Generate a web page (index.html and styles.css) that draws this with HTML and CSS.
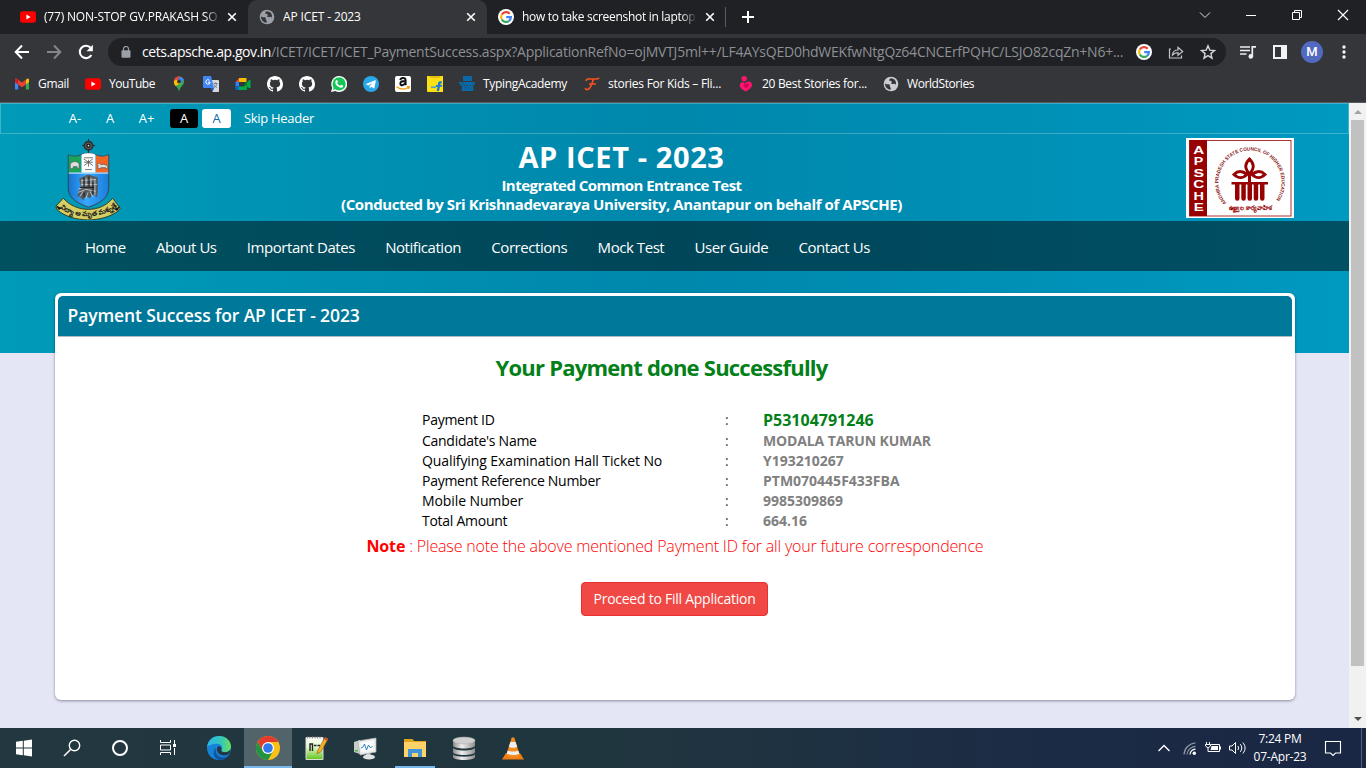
FILE: index.html
```html
<!DOCTYPE html>
<html lang="en">
<head>
<meta charset="utf-8">
<title>AP ICET - 2023</title>
<link rel="stylesheet" href="styles.css">
</head>
<body>
<svg class="defs" width="0" height="0">
  <defs>
    <linearGradient id="edgeTop" x1="0" y1="0" x2="1" y2="0"><stop offset="0" stop-color="#2bb5ea"/><stop offset=".6" stop-color="#36c8b8"/><stop offset="1" stop-color="#6ce05a"/></linearGradient>
    <linearGradient id="shield" x1="0" y1="0" x2="1" y2="0"><stop offset="0" stop-color="#1673cf"/><stop offset=".45" stop-color="#36a8ff"/><stop offset="1" stop-color="#1b7ddb"/></linearGradient>
    <linearGradient id="disk" x1="0" y1="0" x2="1" y2="0"><stop offset="0" stop-color="#8b8b8b"/><stop offset=".4" stop-color="#efefef"/><stop offset="1" stop-color="#8f8f8f"/></linearGradient>
    <linearGradient id="note" x1="0" y1="0" x2="0" y2="1"><stop offset="0" stop-color="#fff"/><stop offset=".45" stop-color="#dff5c6"/><stop offset="1" stop-color="#5fc51d"/></linearGradient>
    <symbol id="youtube" viewBox="0 0 16 16"><rect y="2.3" width="16" height="11.4" rx="2.6" fill="#f00"/><path d="M6.4 5.6v4.8L10.6 8z" fill="#fff"/></symbol>
    <symbol id="globe" viewBox="0 0 16 16"><circle cx="8" cy="8" r="7.3" fill="currentColor"/><path d="M2 7.300c1.500 1.700 3 .4 4.300 1.300 1.300 1-.1 2 .9 2.700.9.600.6 1.500.3 2.400C4.500 13.700 1.800 11 2 7.300zM8.300 2.300c-1.500.4-2.500 1.200-2 2.200.7 1 2.200.2 2.500 1.300.2 1-1.300 1.400-.2 2.100 1.500.7 2.700-.6 3.700.2.500.5.300 1.500-.1 2.300 1.900-3.200.6-7.400-3.900-8.100z" fill="var(--hole)"/></symbol>
    <symbol id="google" viewBox="0 0 16 16"><circle cx="8" cy="8" r="8" fill="#fff"/><g fill="none" stroke-width="2.2"><path d="M11.700 4.700A4.900 4.900 0 0 0 3.800 5.500" stroke="#ea4335"/><path d="M3.800 5.500a4.900 4.900 0 0 0 0 5" stroke="#fbbc05"/><path d="M3.800 10.500a4.900 4.900 0 0 0 7.300 1.300" stroke="#34a853"/><path d="M11.100 11.800C12.400 10.700 12.900 9.500 12.900 8.200H8.200" stroke="#4285f4"/></g></symbol>
    <symbol id="github" viewBox="0 0 16 16"><path fill="#fff" d="M8 0C3.580 0 0 3.580 0 8c0 3.540 2.290 6.530 5.470 7.590.4.070.55-.17.55-.38v-1.490c-2.010.37-2.530-.49-2.690-.94-.09-.23-.48-.94-.82-1.130-.28-.15-.68-.52-.01-.53.63-.01 1.080.58 1.230.82.72 1.210 1.870.87 2.330.66.07-.52.28-.87.51-1.070-1.780-.2-3.640-.89-3.640-3.950 0-.87.31-1.590.82-2.150-.08-.2-.36-1.020.08-2.120 0 0 .67-.21 2.200.82a7.600 7.600 0 0 1 4 0c1.530-1.040 2.200-.82 2.200-.82.44 1.100.16 1.920.08 2.120.51.56.82 1.270.82 2.150 0 3.070-1.870 3.750-3.650 3.950.29.25.54.73.54 1.480v2.200c0 .21.15.46.55.38A8 8 0 0 0 16 8c0-4.420-3.580-8-8-8z"/></symbol>
    <symbol id="close" viewBox="0 0 10 10"><path d="M1.200 1.200l7.600 7.600M8.800 1.200L1.200 8.800" stroke="#fff" stroke-width="1.600" fill="none"/></symbol>
  </defs>
</svg>

<div class="tabs">
  <div class="tab tab-first"><svg class="i16"><use href="#youtube"/></svg><span class="tab-title fade">(77) NON-STOP GV.PRAKASH SO</span><svg class="x"><use href="#close"/></svg></div>
  <div class="tab tab-active"><svg class="i16 globe-dim"><use href="#globe"/></svg><span class="tab-title">AP ICET - 2023</span><svg class="x"><use href="#close"/></svg></div>
  <div class="tab tab-last"><svg class="i16"><use href="#google"/></svg><span class="tab-title fade">how to take screenshot in laptop</span><svg class="x"><use href="#close"/></svg></div>
  <svg class="plus" viewBox="0 0 12 12"><path d="M6 0v12M0 6h12" stroke="#fff" stroke-width="2"/></svg>
  <div class="window-buttons">
    <svg viewBox="0 0 12 12"><path d="M1 3.500l5 5 5-5" fill="none" stroke="#ddd"/></svg>
    <svg viewBox="0 0 12 12"><path d="M1 6.500h10" stroke="#fff"/></svg>
    <svg viewBox="0 0 12 12"><path d="M1.500 3.500h7v7h-7zM3.500 3.500v-2h7v7h-2" fill="none" stroke="#fff"/></svg>
    <svg viewBox="0 0 12 12"><path d="M1 1l10 10M11 1L1 11" stroke="#fff" stroke-width="1.200"/></svg>
  </div>
</div>

<div class="toolbar">
  <svg class="nav-ico" viewBox="0 0 16 16"><path d="M15 8H2M8 1.500L1.700 8 8 14.500" fill="none" stroke="#fff" stroke-width="2"/></svg>
  <svg class="nav-ico" viewBox="0 0 16 16"><path d="M1 8h13M8 1.500L14.300 8 8 14.500" fill="none" stroke="#85868a" stroke-width="2"/></svg>
  <svg class="nav-ico" viewBox="0 0 16 16"><path d="M13.400 11A6.200 6.200 0 1 1 12.700 3.800" fill="none" stroke="#fff" stroke-width="2.100"/><path d="M14.900.8v6.400H8.500z" fill="#fff"/></svg>
  <div class="omnibox">
    <svg class="lock" viewBox="0 0 10 12"><rect x=".5" y="4.300" width="9" height="7.500" rx="1" fill="#9aa0a6"/><path d="M2.500 5V3a2.500 2.500 0 0 1 5 0v2" fill="none" stroke="#9aa0a6" stroke-width="1.200"/></svg>
    <span class="url"><b>cets.apsche.ap.gov.in</b><span>/ICET/ICET/ICET_PaymentSuccess.aspx?ApplicationRefNo=ojMVTJ5ml++/LF4AYsQED0hdWEKfwNtgQz64CNCErfPQHC/LSJO82cqZn+N6+...</span></span>
    <svg class="i16"><use href="#google"/></svg>
    <svg class="i16" viewBox="0 0 16 16"><path d="M3 5H1.500v9h12v-2.500M4.500 11c.3-3.500 2.300-5 5.500-5V3.300l4.700 4.200L10 11.300V8.700c-2.500 0-4 .6-5.500 2.300z" fill="none" stroke="#c3c5c8" stroke-width="1.200"/></svg>
    <svg class="i16" viewBox="0 0 16 16"><path d="M8 1.800l1.800 4.300 4.700.4-3.600 3.100 1.100 4.600L8 11.700l-4 2.500 1.100-4.600L1.500 6.500l4.700-.4z" fill="none" stroke="#d5d7da" stroke-width="1.400"/></svg>
  </div>
  <div class="tools">
    <svg viewBox="0 0 16 16"><path d="M0 3h10M0 6.500h10M0 10h6.500" stroke="#eee" stroke-width="1.600"/><path d="M12.300 12.500V2.800H16" fill="none" stroke="#eee" stroke-width="1.700"/><circle cx="10.800" cy="12.400" r="2.300" fill="#eee"/></svg>
    <svg viewBox="0 0 16 16"><path d="M1 1h14v14H1zM3 3v10h6V3z" fill="#f1f3f4" fill-rule="evenodd"/></svg>
    <span class="avatar">M</span>
    <svg viewBox="0 0 16 16"><g fill="#f1f3f4"><circle cx="8" cy="3" r="1.700"/><circle cx="8" cy="8" r="1.700"/><circle cx="8" cy="13" r="1.700"/></g></svg>
  </div>
</div>

<div class="bookmarks">
  <div class="bm w55"><svg viewBox="0 0 16 16"><path d="M1 4v9.500h3.200V7z" fill="#4285f4"/><path d="M15 4v9.500h-3.200V7z" fill="#34a853"/><path d="M11.800 3.800L13.200 2.700C14 2.200 15 2.800 15 3.800V6l-3.200 2.400z" fill="#fbbc04"/><path d="M1 6V3.800c0-1 1-1.600 1.800-1.100L8 6.600l3.800-2.900v4.700L8 11.300 4.200 8.400z" fill="#ea4335"/><path d="M1 3.800C1 2.800 2 2.200 2.800 2.700l1.400 1v4.700L1 6z" fill="#c5221f"/></svg><span>Gmail</span></div>
  <div class="bm w70"><svg><use href="#youtube"/></svg><span>YouTube</span></div>
  <div class="bm"><svg viewBox="0 0 16 16"><path d="M8 .5C5 .5 2.900 2.700 2.900 5.600c0 4 3.800 4.700 5.100 9.900 1.300-5.200 5.100-5.900 5.100-9.900C13.100 2.700 11 .5 8 .5z" fill="#34a853"/><path d="M3.900 2.500A5 5 0 0 1 9.600.8L4.200 8.500A5.100 5.100 0 0 1 3.900 2.500z" fill="#ea4335"/><path d="M9.600.8a5 5 0 0 1 3.100 2.900L9 8 5.500 4z" fill="#4285f4"/><path d="M10 7.200L4.600 10C3 8.200 2.700 7 3 5l3-2z" fill="#fbbc04"/><path d="M3.900 2.500L6.300 4.300 8.500.5C6.500.4 4.900 1.100 3.900 2.500z" fill="#ea4335"/><circle cx="8" cy="5.500" r="1.900" fill="#35363a"/></svg></div>
  <div class="bm"><svg viewBox="0 0 16 16"><path d="M6 4h9.200c.5 0 .8.300.8.800v10.400c0 .5-.3.800-.8.800H9.500z" fill="#d7d9dc"/><path d="M.8 0H8l3 12H.8a.8.800 0 0 1-.8-.8V.8C0 .3.300 0 .8 0z" fill="#4285f4"/><path d="M9.500 16L8 12h3z" fill="#1a56c4"/><path d="M6.500 4.300a2.200 2.200 0 1 0 .7 1.900H5" fill="none" stroke="#fff"/><path d="M10.500 7.500h4M12.500 6.500v1M14 7.500c-.5 2-1.500 3-3 4M11 8.500c.6 1.500 1.600 2.400 3 3" fill="none" stroke="#667684" stroke-width=".9"/></svg></div>
  <div class="bm"><svg viewBox="0 0 16 16"><path d="M4 2h7.500v4H4z" fill="#fbbc04"/><path d="M4 2v4H.5z" fill="#ea4335"/><path d="M.5 6H4v4.500H.5z" fill="#2684fc"/><path d="M.5 10.500H4V14H1.500a1 1 0 0 1-1-1z" fill="#0066da"/><path d="M4 10.500h4.500L12 8v5a1 1 0 0 1-1 1H4z" fill="#00ac47"/><path d="M12 6.300l2.500-2.500c.5-.4 1 0 1 .5v7.400c0 .5-.5.900-1 .5L12 10.500z" fill="#00ac47"/><path d="M9 8l3-2.500v5z" fill="#00832d"/></svg></div>
  <div class="bm"><svg><use href="#github"/></svg></div>
  <div class="bm"><svg><use href="#github"/></svg></div>
  <div class="bm"><svg viewBox="0 0 16 16"><path d="M0 16l1.200-4.200A8 8 0 1 1 4.200 14.900z" fill="#fff"/><circle cx="8.100" cy="7.900" r="6.600" fill="#13c656"/><path d="M2 14l1-3 2 2z" fill="#13c656"/><path d="M5.200 4.200c.5-.5 1-.3 1.200.2l.6 1.400-.8 1.100c.8 1.500 1.700 2.300 3 2.900l1-1.100 1.700.9c.5.300.2 1-.2 1.500-1 1-2.500.8-4.300-.3C5 9.300 4.100 7.500 4.300 6c.1-.7.400-1.300.9-1.800z" fill="#fff"/></svg></div>
  <div class="bm"><svg viewBox="0 0 16 16"><circle cx="8" cy="8" r="8" fill="#28a8e8"/><path d="M3 7.900l9-3.700c.6-.2.900.1.800.8L11.400 12c-.1.500-.5.600-.9.300L8.300 10.700l-1.200 1.200c-.3.200-.5.100-.5-.2l.1-1.600L10 6.800 5.500 9.400 3.200 8.600c-.5-.2-.6-.5-.2-.7z" fill="#fff"/></svg></div>
  <div class="bm"><svg viewBox="0 0 16 16"><rect width="16" height="16" rx="2" fill="#fff"/><path d="M5.300 4.200C5.500 2.700 6.500 2 8 2s2.600.8 2.600 2.300v3.300c0 .6.200.9.600 1.400M10.300 5C7 5 5.300 5.600 5.300 7.500c0 2.500 4 2.200 4.800-.5" fill="none" stroke="#111" stroke-width="1.900"/><path d="M1.500 10.800c3.700 3 8.800 3 12 .7M12 10.700l2.300-.1-.5 2.400" fill="none" stroke="#f90" stroke-width="1.200"/></svg></div>
  <div class="bm"><svg viewBox="0 0 16 16"><path d="M0 0h16v16H1a1 1 0 0 1-1-1z" fill="#fbe016"/><path d="M2 0c0 3 12 3 12 0z" fill="#e5bd0c"/><path d="M15 5.500c-2.500-.7-4 .1-4 2v1.500H9l-.4 1.700h2l-.9 4.300h2.300l.9-4.300h2l.4-1.700h-2c0-1 .1-1.500 1.300-1.400z" fill="#1878d8"/><path d="M4 10.500h5v1.400H4z" fill="#3a9be8"/></svg></div>
  <div class="bm w108"><svg viewBox="0 0 16 16" fill="#0868a8"><path d="M4 0h9v5H4zM0 6h3v4H1.500v-2H0zM14 6h2v3h-1.500v-2H14zM3.500 6H14l.5 9h-12z"/><g fill="#35363a"><path d="M3.500 5h10v1h-10zM5 9h1v1H5zM8 9h1v1H8zM11 9h1v1h-1zM6 11.500h1v1H6zM9 11.500h1v1H9z"/></g></svg><span>TypingAcademy</span></div>
  <div class="bm w138"><svg viewBox="0 0 16 16"><path d="M2 5C2 3 4 2.800 6 3h6c2 0 2.500-.5 3-1.300M9.500 3C8 7 7 13 3.500 13.500c-1.500.2-2.200-.5-2-1.500M5 8h7" fill="none" stroke="#f4511e" stroke-width="1.700"/></svg><span>stories For Kids – Fli...</span></div>
  <div class="bm w130"><svg viewBox="0 0 16 16"><circle cx="6.200" cy="2.800" r="2.700" fill="#ff146e"/><path d="M7.700 15.500C3 13 1 10.500 2 8c.8-2 3.500-2.300 5-.3C8.500 5 13.500 4.500 14 8.500c.2 3-3 5-6.300 7z" fill="#ff146e"/><path d="M8 8.500c1-1.500 3-1 2.800.7-.1 1.300-1.500 2-2.800 3-1.500-1-2.700-2-2.400-3.200C5.900 8 7.300 7.500 8 8.500z" fill="#d2005a"/></svg><span>20 Best Stories for...</span></div>
  <div class="bm world"><svg class="globe-light"><use href="#globe"/></svg><span>WorldStories</span></div>
</div>

<div class="viewport">
  <div class="page">
    <div class="hero">
      <div class="access"><a>A-</a><a>A</a><a>A+</a><a class="dark">A</a><a class="light">A</a><a class="skip">Skip Header</a></div>
      <header>
        <svg class="emblem" viewBox="0 0 66 82">
          <path d="M33.500 0v15M27 6.500h13" stroke="#222" stroke-width="1"/><circle cx="33.500" cy="6.800" r="4.300" fill="#555" stroke="#2c2c2c" stroke-width="1.400"/><circle cx="33.500" cy="6.800" r="2" fill="#111"/><circle cx="33.500" cy="6.800" r=".9" fill="#ddd"/>
          <path d="M13 16c4 2 9 2 13 0 3-2 12-2 15 0 4 2 9 2 13 0v34c0 11-12 16-20.500 19C25 66 13 61 13 50z" fill="url(#shield)" stroke="#35434d" stroke-width="1"/>
          <path d="M13.500 16.500c4 2 8 2 12.500 0V34H13.500z" fill="#19a457"/><path d="M41 16.500c4 2 8 2 12.500 0V34H41z" fill="#f26522"/><path d="M26.500 16c3-2 11-2 14 0v18h-14z" fill="#fff"/>
          <path d="M15 30v-4c1-4 7-4 9-1v5h-2v-2h-4v2zM43 30v-3c-1-3 2-3 3-1 3-1 6 0 7 2v2h-2v-1h-5v1z" fill="#ddd" stroke="#444" stroke-width=".6"/>
          <path d="M28.500 20l9.500 7M38 20l-9 7M29 19h9M30 31h7M29 23.500h9M33.500 21v7" stroke="#555" fill="none" stroke-width=".8"/>
          <path d="M13.500 34.500h40" stroke="#e8f3fb"/>
          <path d="M24 40l9-4 10 3v15l-1 5-4-3-3 4-4-2-3 4-4-4-2 1 2-8 2-2z" fill="#565b60"/><path d="M26 42l15-1M26 46h16M27 41v7M31 39v9M36 39v9M40 40v17M23 54l8-3 10 2M25 58l3-5M31 60l2-6M35 53l3 6M23 51l5-2" stroke="#c3c7cb" fill="none" stroke-width=".9"/><path d="M29 39v9M34 38v10M38 44v12M29 54v5M25 49h14" stroke="#16191c"/>
          <path d="M8 60C21 75 46 75 58 60l7.500 10-2 3C47 85 18 85 2 72l-1.500-4z" fill="#d5ce62" stroke="#353419" stroke-width=".9"/><path d="M.5 67l3 5 3-2z M65.500 68l-3 5-3-2z" fill="#111"/>
          <path id="motto" d="M4.500 69.500C20 81.500 46 81.500 62 69" fill="none"/>
          <text class="motto"><textPath href="#motto" textLength="62">విద్యా అమృత మశ్నుతే</textPath></text>
        </svg>
        <div class="titles"><h1>AP ICET - 2023</h1><p class="sub1">Integrated Common Entrance Test</p><p class="sub2">(Conducted by Sri Krishnadevaraya University, Anantapur on behalf of APSCHE)</p></div>
        <svg class="apsche" viewBox="0 0 108 80">
          <rect width="108" height="80" fill="#fff"/><rect x="3.500" y="2.500" width="101.500" height="75.500" fill="none" stroke="#a33" stroke-width="1"/><rect x="3.500" y="2" width="17.500" height="76" fill="#980101"/>
          <g class="side"><text x="7.300" y="15.500" textLength="11" lengthAdjust="spacingAndGlyphs">A</text><text x="7.800" y="27" textLength="9.500" lengthAdjust="spacingAndGlyphs">P</text><text x="7.500" y="38.500" textLength="10.500" lengthAdjust="spacingAndGlyphs">S</text><text x="7.300" y="50" textLength="11" lengthAdjust="spacingAndGlyphs">C</text><text x="7.500" y="61.500" textLength="10.500" lengthAdjust="spacingAndGlyphs">H</text><text x="7.800" y="73" textLength="10" lengthAdjust="spacingAndGlyphs">E</text></g>
          <path id="ring" d="M40.500 65A31.500 31.500 0 1 1 88 64.500" fill="none"/>
          <text class="ring"><textPath href="#ring" textLength="140" lengthAdjust="spacingAndGlyphs">ANDHRA PRADESH STATE COUNCIL OF HIGHER EDUCATION</textPath></text>
          <g fill="none" stroke="#980101" stroke-width="2.900"><path d="M63.500 21c-5 5-5 9 0 15 5-6 5-10 0-15zM61 36.500c-5-4-9-4-13 0 4 4 9 4 13 0zM66 36.500c5-4 9-4 13 0-4 4-9 4-13 0z"/></g>
          <path d="M45.500 44h36.500v2.500H45.500zM62 34h3v12h-3zM49 45h4.500v15.500a2.200 2.200 0 0 1-4.500 0zM55.300 45h4.500v15.500a2.200 2.200 0 0 1-4.500 0zM61.500 45H66v15.500a2.200 2.200 0 0 1-4.500 0zM67.700 45h4.500v15.500a2.200 2.200 0 0 1-4.500 0zM74 45h4.500v15.500a2.200 2.200 0 0 1-4.500 0z" fill="#980101"/>
          <text class="telugu" x="64" y="72" textLength="43" lengthAdjust="spacingAndGlyphs">ఉజ్జ్వల కార్యవాహిక</text>
        </svg>
      </header>
      <nav><a>Home</a><a>About Us</a><a>Important Dates</a><a>Notification</a><a>Corrections</a><a>Mock Test</a><a>User Guide</a><a>Contact Us</a></nav>
    </div>
    <main>
      <h2>Payment Success for AP ICET - 2023</h2>
      <h3>Your Payment done Successfully</h3>
      <dl>
        <dt>Payment ID</dt><i>:</i><dd class="pid">P53104791246</dd>
        <dt>Candidate's Name</dt><i>:</i><dd class="name">MODALA TARUN KUMAR</dd>
        <dt class="wide">Qualifying Examination Hall Ticket No</dt><i>:</i><dd>Y193210267</dd>
        <dt>Payment Reference Number</dt><i>:</i><dd>PTM070445F433FBA</dd>
        <dt class="wide">Mobile Number</dt><i>:</i><dd>9985309869</dd>
        <dt>Total Amount</dt><i>:</i><dd>664.16</dd>
      </dl>
      <p class="note"><b>Note</b> : Please note the above mentioned Payment ID for all your future correspondence</p>
      <button>Proceed to Fill Application</button>
    </main>
  </div>
  <div class="scrollbar"><svg viewBox="0 0 17 17"><path d="M5 11l4-4 4 4z" fill="#a3a3a3"/></svg><div class="thumb"></div><svg viewBox="0 0 17 17"><path d="M5 6h8l-4 4z" fill="#505050"/></svg></div>
</div>

<div class="taskbar">
  <div class="task"><svg viewBox="0 0 24 24"><path d="M4 5.800l6.800-1v6.700H4zM11.800 4.700L20 3.500v8h-8.200zM4 12.500h6.800v6.700l-6.800-1zM11.800 12.500H20v8l-8.200-1.200z" fill="#fff"/></svg></div>
  <div class="task"><svg viewBox="0 0 24 24"><circle cx="14.500" cy="9.500" r="5.200" fill="none" stroke="#fff" stroke-width="1.400"/><path d="M10.800 13.200L4 20" stroke="#fff" stroke-width="1.500"/></svg></div>
  <div class="task"><svg viewBox="0 0 24 24"><circle cx="12" cy="12" r="7" fill="none" stroke="#fff" stroke-width="2"/></svg></div>
  <div class="task"><svg viewBox="0 0 24 24"><path d="M4.500 4v2.500h10V4M4.500 19v-2.500h10V19M4.500 9h10v5h-10zM18.500 4v4M18.500 12v7" fill="none" stroke="#fff"/><rect x="17" y="8" width="3" height="3" fill="#fff"/></svg></div>
  <div class="task edge"><svg viewBox="0 0 24 24"><circle cx="12" cy="12" r="12" fill="#1683d8"/><path d="M.1 11C.8 4.500 5.700 0 12 0c7 0 12 5 12 10.500 0 4-3.500 5.800-6 5.800-3 0-4.300-1.300-3.500-2.500 1.500-2 .5-6-4.500-6-5 0-9 2-9.900 3.200z" fill="url(#edgeTop)"/><path d="M9 12c-1.500 5 2 9.500 7 9.500 2.500 0 4.500-1 6-2.500-2 3.500-6 5.300-10 5-6-1.500-7-9-3-12z" fill="#1153a0"/><path d="M14.500 13.800c-.8 1.200.5 2.500 3.500 2.500 2.300 0 4.500-1 5.700-3.300-.5 4-2.400 6-4.700 6.300C13 20 9.500 16.500 10 12.500c.5-3.500 5-3 4.500 1.300z" fill="#22373f"/></svg></div>
  <div class="task active"><svg viewBox="0 0 24 24"><circle cx="12" cy="12" r="12" fill="#fbc116"/><path d="M1.600 6A12 12 0 0 1 22.400 6H12l-5.200 9z" fill="#e33b2e"/><path d="M1.600 6L6.800 15 12 18 17.200 15 12 24A12 12 0 0 1 1.600 6z" fill="#229342"/><circle cx="12" cy="12" r="6" fill="#fff"/><circle cx="12" cy="12" r="4.800" fill="#3178ea"/></svg></div>
  <div class="task"><svg viewBox="0 0 24 24"><path d="M2 1.500h17v22H2z" fill="url(#note)" stroke="#d9ddd6"/><path d="M3 1.500h15" stroke="#888" stroke-dasharray="1 1.500" stroke-width="2"/><path d="M6 15V8h2.500v7M10 9.500h2.500M13.500 9.500H16" fill="none" stroke="#222" stroke-width="1.400"/><path d="M13 18l1-4L21 1.500l3 1.500-7 12.500z" fill="#f0b429" stroke="#a1621a" stroke-width=".7"/><path d="M21 1.500L24 3l-1 1.800-3-1.500z" fill="#d0493d"/></svg></div>
  <div class="task app"><svg viewBox="0 0 24 24"><path d="M1 6l6-2v14l-6-2z" fill="#c9cdc8"/><path d="M2 14h3v1.500H2z" fill="#3fbf3c"/><path d="M5 5l18-3v14l-16 3z" fill="#eceeee" stroke="#b0b5b5" stroke-width=".7"/><path d="M7.500 7l13-2.500v9.500l-12 2z" fill="#fafcff"/><path d="M8 12l2-1 1.500-3 2 6 2-5 2 3 2-2" fill="none" stroke="#3288bd"/><path d="M13 17.500l4-.8 1 3.300h-5z" fill="#bcc2c4"/><ellipse cx="16" cy="21" rx="6" ry="2.500" fill="#dfe3e4"/></svg></div>
  <div class="task running"><svg viewBox="0 0 24 24"><path d="M1 3h8.500l1.500 2h12v16H1z" fill="#e0a51d"/><path d="M1 6h22v15H1z" fill="#ffd367"/><path d="M5 13h14v8h-4v-4H9v4H5z" fill="#3c96d9"/></svg></div>
  <div class="task app"><svg viewBox="0 0 24 24" fill="url(#disk)"><path d="M1 18v3c0 4 22 4 22 0v-3c0 3.500-22 3.500-22 0zM1 11.500v4.500c0 4 22 4 22 0v-4.500c0 4-22 4-22 0zM1 4.500V9.500c0 4 22 4 22 0V4.500z"/><ellipse cx="12" cy="4.500" rx="11" ry="3.400" fill="#cfcfcf" stroke="#aaa" stroke-width=".5"/></svg></div>
  <div class="task app"><svg viewBox="0 0 24 24"><path d="M5 17h14l4 6.500H1z" fill="#f07d13"/><path d="M10.700 1.500h2.600L19 20c-3 2-11 2-14 0z" fill="#f58a1d"/><path d="M9.400 6h5.200l1.600 5c-2 1-6.300 1-8.400 0zM6.700 14.500c2 1.300 8.500 1.300 10.600 0l1 3.300c-3 1.700-9.500 1.700-12.600 0z" fill="#eee"/></svg></div>
  <div class="tray">
    <svg viewBox="0 0 16 16"><path d="M2.500 11L8 5.500l5.500 5.500" fill="none" stroke="#fff" stroke-width="1.400"/></svg>
    <svg viewBox="0 0 16 16"><g fill="none" stroke="#8e98a5" stroke-width="1.200"><path d="M2 14.500A12 12 0 0 1 13.500 3M5 14.500A9 9 0 0 1 13.500 6.300"/><path d="M8 14.500a6 6 0 0 1 5.500-5.300" stroke="#fff"/></g><circle cx="12.300" cy="13.300" r="1.700" fill="#fff"/></svg>
    <svg viewBox="0 0 16 16"><path d="M6 4.500h8.500v7H4.500M15.500 6.500v3" fill="none" stroke="#fff"/><path d="M6.500 6H13v4H5.500z" fill="#fff"/><path d="M1.500 2v2.500M4.500 2v2.500M.5 4.500h5v1.500L3 8 .5 6zM3 8v3.500h2" fill="none" stroke="#fff"/></svg>
    <svg class="vol" viewBox="0 0 18 16"><path d="M1.500 6h2.500l3.500-3.500v11L4 10H1.500zM9.800 6c1 1.200 1 2.800 0 4M12.300 4.200c2 2.300 2 5.300 0 7.600M14.800 2.500c3 3.500 3 7.500 0 11" fill="none" stroke="#fff"/></svg>
    <div class="clock"><span>7:24 PM</span><span>07-Apr-23</span></div>
    <svg class="msg" viewBox="0 0 18 18"><path d="M1.500 2.500h15v11.500h-5L9 16.500 6.500 14h-5z" fill="none" stroke="#fff" stroke-width="1.100"/></svg>
    <div class="peek"></div>
  </div>
</div>
</body>
</html>
```
FILE: styles.css
```css
* { box-sizing: border-box; }
body { margin: 0; width: 1366px; height: 768px; overflow: hidden; display: flex; flex-direction: column; font-family: "Open Sans", "Noto Sans", sans-serif; background: #202124; color: #fff; }
h1, h2, h3, p, dl, dd { margin: 0; }
svg { display: block; flex: none; }
.defs { position: absolute; }
.i16 { width: 16px; height: 16px; }
.globe-dim { color: #9aa0a6; --hole: #35363a; }
.globe-light { color: #c9ccd0; --hole: #35363a; }

/* browser tabs */
.tabs { height: 34px; display: flex; align-items: center; background: #202124; }
.tab { height: 34px; display: flex; align-items: center; font-size: 12px; }
.tab-first { width: 248px; padding-left: 20px; }
.tab-active { width: 239px; padding-left: 11px; background: #35363a; border-radius: 9px 9px 0 0; }
.tab-last { width: 239px; padding-left: 11px; height: 20px; border-right: 1px solid #5c5d61; }
.tab-title { margin-left: 8px; width: 175px; overflow: hidden; white-space: nowrap; letter-spacing: -.13px; padding-bottom: 1px; }
.tab-last .tab-title { width: 173px; letter-spacing: -.3px; }
.tab-first .tab-title { letter-spacing: -.2px; }
.fade { -webkit-mask-image: linear-gradient(90deg, #000 92%, transparent 101%); mask-image: linear-gradient(90deg, #000 92%, transparent 101%); }
.x { width: 10px; height: 10px; margin-left: 8px; }
.tab-last .x { margin-left: 10px; }
.plus { width: 12px; height: 12px; margin-left: 16px; }
.window-buttons { margin-left: auto; display: flex; gap: 34px; padding: 0 17px 5px 0; }
.window-buttons svg { width: 12px; height: 12px; }

/* address row */
.toolbar { height: 35px; display: flex; align-items: center; background: #35363a; padding-left: 14px; }
.nav-ico { width: 16px; height: 16px; margin-right: 16px; }
.omnibox { width: 1118px; height: 28px; margin-left: -2px; display: flex; align-items: center; border-radius: 14px; background: #202124; padding-left: 13px; }
.lock { width: 10px; height: 12px; margin-right: 11px; }
.url { flex: none; width: 994px; white-space: nowrap; font-size: 14px; color: #8d9095; display: flex; }
.url b { font-weight: 400; color: #fff; letter-spacing: -.46px; }
.url span { letter-spacing: -.24px; }
.omnibox .i16 { margin-right: 16px; }
.omnibox .i16:last-child { margin-right: 10px; }
.tools { display: flex; align-items: center; margin-left: 14px; }
.tools svg { width: 16px; height: 16px; margin-right: 16px; }
.tools svg:nth-child(2) { margin-right: 13px; }
.avatar { width: 22px; height: 22px; border-radius: 50%; background: #5169c0; font: 500 13px/22px Roboto, sans-serif; text-align: center; margin-right: 13px; }
.tools svg:last-child { margin: 0; }

/* bookmarks */
.bookmarks { height: 34px; display: flex; gap: 16px; padding: 0 14px 4px; align-items: center; background: #35363a; border-bottom: 1px solid #5b5b5d; }
.bm { display: flex; gap: 8px; align-items: center; font-size: 12px; white-space: nowrap; letter-spacing: -.31px; }
.bm svg { width: 16px; height: 16px; }
.w55 { width: 55px; }
.w70 { width: 70px; letter-spacing: -.48px; }
.w108 { width: 109px; }
.w138 { width: 138px; letter-spacing: -.26px; }
.w130 { width: 129px; }
.world { letter-spacing: -.42px; }

/* web page */
.viewport { flex: 1; min-height: 0; display: flex; }
.page { width: 1349px; background: #e4e6f5; }
.hero { height: 250px; background: linear-gradient(90deg, #009bb8 0, #0087ac 50%, #0099c0 100%); }
.access { height: 31px; border: 1px solid rgba(255,255,255,.24); padding-left: 60px; display: flex; align-items: center; font-size: 13px; }
.access a { width: 28px; margin-right: 7px; height: 19px; line-height: 19px; text-align: center; }
.access a:nth-child(3) { width: 31px; }
.access .dark { background: #000; border-radius: 3px; margin: 0 4px 0 1px; }
.access .light { background: #fff; color: #1268a8; border-radius: 3px; width: 29px; margin-right: 13px; }
.access .skip { width: auto; letter-spacing: -.3px; }
header { height: 87px; padding: 0 55px; display: flex; }
.emblem { width: 66px; height: 81px; margin: 5px 0 0 0; }
.motto { font-size: 7px; font-weight: 700; fill: #222; }
.titles { flex: 1; text-align: center; padding: 3px 64px 0 0; margin-top: -1px; }
h1 { font-size: 29px; line-height: 40px; letter-spacing: .6px; padding-top: 1px; margin-bottom: -1px; }
.titles p { font-size: 15px; line-height: 19px; font-weight: 700; white-space: nowrap; }
.sub1 { letter-spacing: -.55px; }
.sub2 { letter-spacing: -.41px; }
.apsche { width: 108px; height: 80px; margin-top: 4px; }
.side { font: 700 10px "Liberation Sans", sans-serif; fill: #fff; }
.ring { font: 700 5px "Liberation Sans", sans-serif; fill: #8a2020; }
.telugu { font-size: 6.500px; fill: #980101; text-anchor: middle; font-weight: 700; }
nav { height: 50px; background: rgba(0,0,0,.48); padding: 2px 0 0 85px; display: flex; gap: 30.250px; align-items: center; font-size: 15px; letter-spacing: -.44px; }
main { width: 1240px; height: 407px; margin: -60px 0 0 55px; background: #fff; border-radius: 6px; box-shadow: 0 1px 3px rgba(0,0,30,.4); padding: 3px; color: #000; }
h2 { height: 41px; background: #007899; border-radius: 5px 5px 0 0; border-bottom: 1px solid #aebdc2; color: #fff; font-size: 17.500px; line-height: 38px; font-weight: 600; padding-left: 9.500px; letter-spacing: -.12px; }
h3 { color: #038018; font-size: 22px; line-height: 30px; letter-spacing: -.77px; text-align: center; padding: 15px 27px 0 0; }
dl { margin: 28px 0 0 364px; display: grid; grid-template-columns: 303px 38px 400px; font-size: 14px; grid-template-rows: 21px; grid-auto-rows: 20px; line-height: 20px; }
dt { letter-spacing: -.27px; font-weight: 500; }
.wide { letter-spacing: -.1px; }
dl i { font-style: normal; color: #444; }
dd { color: #808080; font-weight: 700; }
.name { letter-spacing: -.13px; }
.pid { color: #038018; font-size: 16px; }
.note { color: #f00; font-size: 16px; font-weight: 300; letter-spacing: -.17px; text-align: center; line-height: 24px; margin-top: 3px; }
.note b { font-weight: 700; }
button { display: block; margin: 24px auto 0 523px; width: 187px; height: 34px; border: 1px solid #e8302c; border-radius: 4px; background: #f04844; color: #fff; font: 14px "Open Sans", sans-serif; letter-spacing: -.25px; padding: 0 0 1px; }
.scrollbar { width: 17px; background: #f1f1f1; display: flex; flex-direction: column; align-items: center; }
.scrollbar svg { width: 17px; height: 17px; }
.thumb { width: 13px; height: 546px; background: #c1c1c1; margin-bottom: auto; }

/* taskbar */
.taskbar { height: 40px; display: flex; background: linear-gradient(90deg, #22373f 0, #20363f 45%, #1b2a45 80%, #1a2744); }
.task { width: 48px; display: flex; justify-content: center; align-items: center; }
.task svg { width: 24px; height: 24px; }
.app { width: 49px; }
.edge { width: 52px; padding-left: 2px; }
.active { background: #53636a; border-bottom: 2px solid #76b9ed; padding-top: 2px; }
.running { border-bottom: 2px solid #76b9ed; padding-top: 2px; width: 40px; margin: 0 4px 0 6px; }
.tray { margin-left: auto; display: flex; align-items: center; width: 210px; }
.tray svg { width: 16px; height: 16px; margin-right: 7px; }
.tray svg:first-child { margin-right: 10px; }
.tray .vol { width: 18px; margin-right: 6px; }
.clock { width: 56px; text-align: center; font-size: 12px; line-height: 18px; display: flex; flex-direction: column; letter-spacing: -.24px; margin-right: 16px; white-space: nowrap; }
.tray .msg { width: 18px; height: 18px; margin: 0; }
.peek { width: 1px; height: 40px; margin-left: auto; margin-right: 4px; background: #566078; }
```
